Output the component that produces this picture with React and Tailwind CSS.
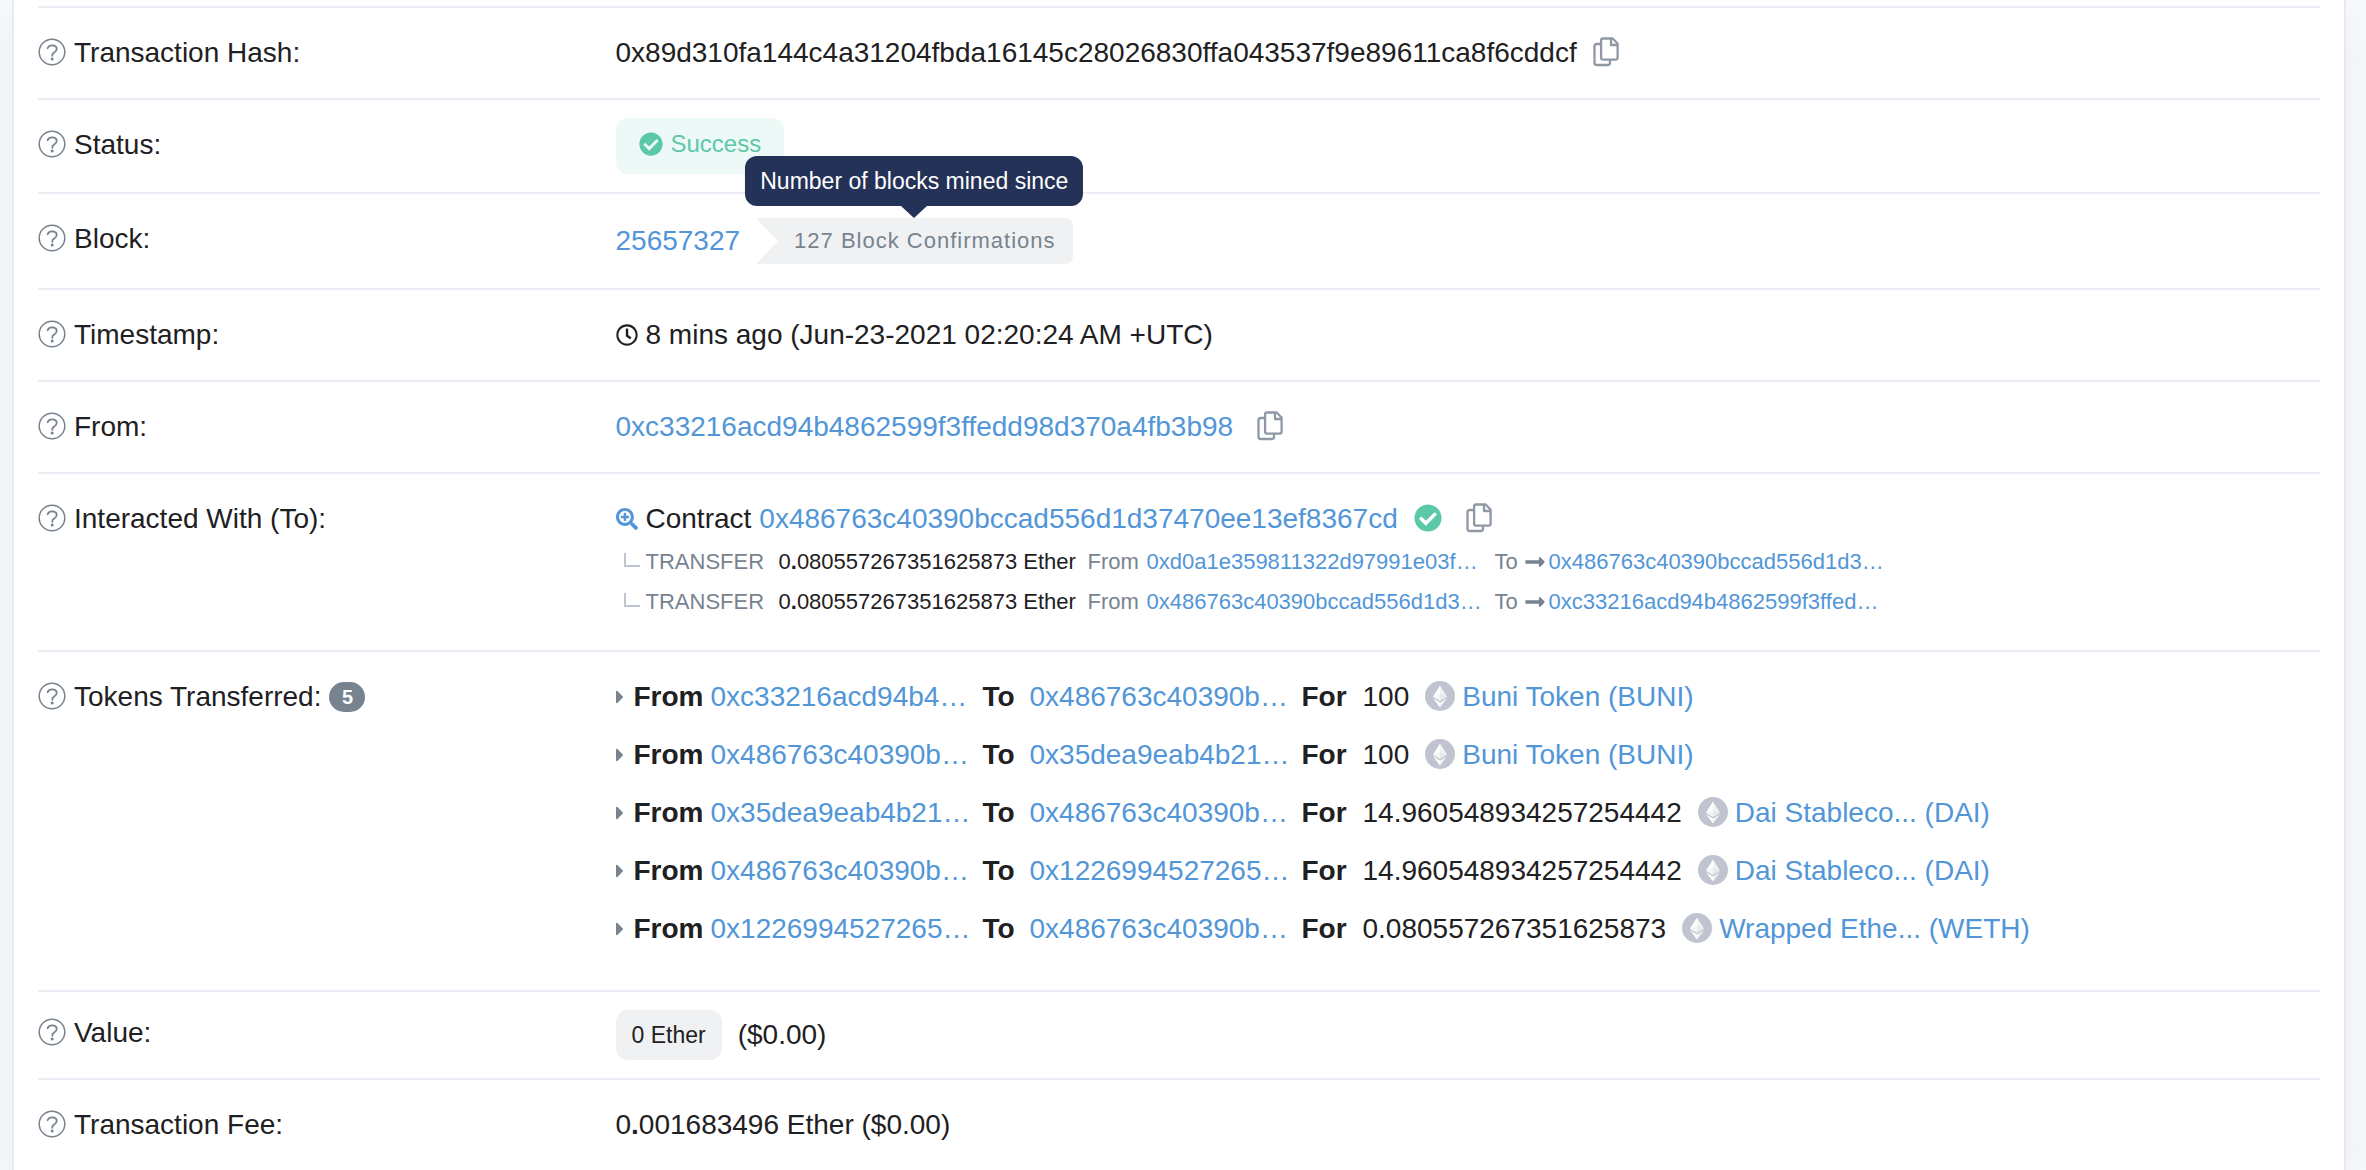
import React from 'react'
import {FaCaretRight, FaCheckCircle, FaLongArrowAltRight, FaRegClock, FaSearchPlus} from 'react-icons/fa'

const internalTransfers = [
  {from: '0xd0a1e359811322d97991e03f…', to: '0x486763c40390bccad556d1d3…'},
  {from: '0x486763c40390bccad556d1d3…', to: '0xc33216acd94b4862599f3ffed…'},
]

const tokenTransfers = [
  {from: '0xc33216acd94b4…', to: '0x486763c40390b…', amount: '100', token: 'Buni Token (BUNI)'},
  {from: '0x486763c40390b…', to: '0x35dea9eab4b21…', amount: '100', token: 'Buni Token (BUNI)'},
  {from: '0x35dea9eab4b21…', to: '0x486763c40390b…', amount: '14.960548934257254442', token: 'Dai Stableco... (DAI)'},
  {from: '0x486763c40390b…', to: '0x1226994527265…', amount: '14.960548934257254442', token: 'Dai Stableco... (DAI)'},
  {from: '0x1226994527265…', to: '0x486763c40390b…', amount: '0.080557267351625873', token: 'Wrapped Ethe... (WETH)'},
]

const HelpIcon = () => (
  <svg
    viewBox="0 0 28 28"
    className="mb-0.5 size-7 shrink-0 text-[#77838f]"
    fill="none"
    stroke="currentColor"
    aria-hidden="true"
  >
    <circle cx="14" cy="14" r="12.8" strokeWidth="1.5" />
    <path
      d="M9.6 10.2c.8-1.9 2.3-2.9 4.5-2.9 2.6 0 4.6 1.5 4.6 3.7 0 1.8-1.1 2.7-2.5 3.5-1.3.8-1.9 1.3-1.9 2.7v.6"
      strokeWidth="1.8"
      strokeLinecap="round"
    />
    <circle cx="14.2" cy="20.9" r="1.5" fill="currentColor" stroke="none" />
  </svg>
)

const CopyButton = () => (
  <button type="button" aria-label="Copy to clipboard" className="mb-0.5 shrink-0 text-[#8f99a5]">
    <svg
      viewBox="0 0 26 30"
      className="h-[30px] w-[26px]"
      fill="none"
      stroke="currentColor"
      strokeWidth="2.3"
      strokeLinejoin="round"
      aria-hidden="true"
    >
      <path d="M8 7H3.400A1.900 1.900 0 0 0 1.500 8.900v17.200A1.900 1.900 0 0 0 3.400 28h11.700a1.900 1.900 0 0 0 1.900-1.900V23" />
      <path d="M10 1.500h9.600l5 5v14.200a1.900 1.900 0 0 1-1.900 1.900H10a1.900 1.900 0 0 1-1.900-1.900V3.400A1.900 1.900 0 0 1 10 1.500z" />
      <path d="M18 2v6h6" />
    </svg>
  </button>
)

const TokenIcon = () => (
  <svg viewBox="0 0 30 30" className="mb-0.5 size-[30px] shrink-0" aria-hidden="true">
    <circle cx="15" cy="15" r="15" fill="#bfc4d0" />
    <path d="M15 4.500l-7 11.200 7 4.100z" fill="#fff" />
    <path d="M15 4.500l7 11.200-7 4.100z" fill="#f3f3f5" />
    <path d="M15 12.500l-7 3.200 7 4.100z" fill="#f6f6f8" />
    <path d="M15 12.500l7 3.200-7 4.100z" fill="#e8e9ed" />
    <path d="M8 17.300l7 4.100v5.100z" fill="#fff" />
    <path d="M22 17.300l-7 4.100v5.100z" fill="#f3f3f5" />
  </svg>
)

const AddressLink = ({children, className = ''}) => (
  <a href="#" className={`text-[#5296d8] ${className}`}>
    {children}
  </a>
)

const Row = ({label, count, labelClassName = 'py-6', className = 'py-6', children}) => (
  <div className="flex border-b-2 border-[#ebedf4]">
    <dt className={`flex w-1/4 shrink-0 items-start ${labelClassName}`}>
      <div className="flex h-[42px] items-center gap-2">
        <HelpIcon />
        <span>{label}</span>
        {count && (
          <span className="flex h-[30px] w-9 items-center justify-center rounded-full bg-[#77838f] text-xl font-bold text-white">
            {count}
          </span>
        )}
      </div>
    </dt>
    <dd className={`min-w-0 grow pl-[7px] ${className}`}>{children}</dd>
  </div>
)

const InternalTransfer = ({from, to}) => (
  <li className="flex h-10 items-center text-[22px] text-[#77838f]">
    <span className="mr-1.5 mb-1 ml-2 h-3.5 w-4 border-b-2 border-l-2 border-[#bdc5d1]" />
    <span className="w-[133px]">TRANSFER</span>
    <span className="w-[309px] text-[#1e2022]">
      0<b>.</b>080557267351625873 Ether
    </span>
    <span className="w-[59px]">From</span>
    <AddressLink className="w-[348px]">{from}</AddressLink>
    <span className="w-[30px]">To</span>
    <FaLongArrowAltRight className="mr-1 h-[22px] w-5" />
    <AddressLink>{to}</AddressLink>
  </li>
)

const TokenTransfer = ({from, to, amount, token}) => (
  <li className="mb-4 flex h-[42px] items-center">
    <FaCaretRight className="mr-2.5 h-[22px] w-2 text-[#77838f]" />
    <b className="w-[77px]">From</b>
    <AddressLink className="w-[272px]">{from}</AddressLink>
    <b className="w-[47px]">To</b>
    <AddressLink className="w-[272px]">{to}</AddressLink>
    <b className="w-[61px]">For</b>
    <span className="mr-4">{amount}</span>
    <TokenIcon />
    <AddressLink className="ml-[7px]">{token}</AddressLink>
  </li>
)

export default function App() {
  return (
    <div className="min-h-screen overflow-hidden bg-[#f8f9fa] pr-5 pl-3 font-['Liberation_Sans',Arial,sans-serif] text-[28px] leading-[42px] text-[#1e2022]">
      <main className="min-h-screen border-x-2 border-[#e7eaf3] bg-white pr-6 pl-6 shadow-[0_16px_38px_rgba(189,197,209,0.2)]">
        <div className="h-2 border-b-2 border-[#ebedf4]" />
        <dl>
          <Row label="Transaction Hash:">
            <div className="flex items-center gap-4">
              <span>0x89d310fa144c4a31204fbda16145c28026830ffa043537f9e89611ca8f6cddcf</span>
              <CopyButton />
            </div>
          </Row>

          <Row label="Status:" className="py-[18px]">
            <span className="inline-flex h-14 items-center gap-2 rounded-xl bg-[#edf9f6] px-[23px] pb-1 align-top text-2xl text-[#5bc8a8]">
              <FaCheckCircle className="size-6" />
              Success
            </span>
          </Row>

          <Row label="Block:">
            <div className="flex h-[46px] items-center gap-4">
              <AddressLink>25657327</AddressLink>
              <div className="relative flex h-[46px] items-center rounded-r-lg bg-[#f0f1f3] pr-[17px] pl-[38px] text-[22px] tracking-[1px] text-[#77838f]">
                <svg viewBox="0 0 22 46" className="absolute top-0 left-0 h-full w-[22px]" aria-hidden="true">
                  <path d="M0 0l22 23L0 46z" fill="#fff" />
                </svg>
                127 Block Confirmations
                <div
                  role="tooltip"
                  className="absolute bottom-full left-1/2 mb-3 flex h-[50px] -translate-x-1/2 items-center rounded-xl bg-[#243257] px-[15px] text-[23px] tracking-normal whitespace-nowrap text-white"
                >
                  Number of blocks mined since
                  <svg
                    viewBox="0 0 26 13"
                    className="absolute top-full left-1/2 h-[13px] w-[26px] -translate-x-1/2"
                    aria-hidden="true"
                  >
                    <path d="M0 0h26L13 12z" fill="#243257" />
                  </svg>
                </div>
              </div>
            </div>
          </Row>

          <Row label="Timestamp:">
            <div className="flex items-center gap-2">
              <FaRegClock className="size-[22px]" />
              8 mins ago (Jun-23-2021 02:20:24 AM +UTC)
            </div>
          </Row>

          <Row label="From:">
            <div className="flex items-center gap-6">
              <AddressLink>0xc33216acd94b4862599f3ffedd98d370a4fb3b98</AddressLink>
              <CopyButton />
            </div>
          </Row>

          <Row label="Interacted With (To):" className="pt-6 pb-7">
            <div className="mb-0.5 flex items-center">
              <FaSearchPlus className="mr-2 size-[22px] text-[#5296d8]" />
              <span className="mr-2">Contract</span>
              <AddressLink className="mr-4">0x486763c40390bccad556d1d37470ee13ef8367cd</AddressLink>
              <FaCheckCircle className="mr-6 mb-0.5 size-7 text-[#5bc8a8]" />
              <CopyButton />
            </div>
            <ul>
              {internalTransfers.map((transfer, i) => (
                <InternalTransfer key={i} {...transfer} />
              ))}
            </ul>
          </Row>

          <Row label="Tokens Transferred:" count="5">
            <ul>
              {tokenTransfers.map((transfer, i) => (
                <TokenTransfer key={i} {...transfer} />
              ))}
            </ul>
          </Row>

          <Row label="Value:" labelClassName="py-5" className="py-[18px]">
            <div className="flex items-center gap-4">
              <span className="flex h-[50px] items-center rounded-xl bg-[#f0f1f3] px-4 text-[23px]">0 Ether</span>
              <span>($0.00)</span>
            </div>
          </Row>

          <Row label="Transaction Fee:">
            0<b>.</b>001683496 Ether ($0.00)
          </Row>
        </dl>
      </main>
    </div>
  )
}
